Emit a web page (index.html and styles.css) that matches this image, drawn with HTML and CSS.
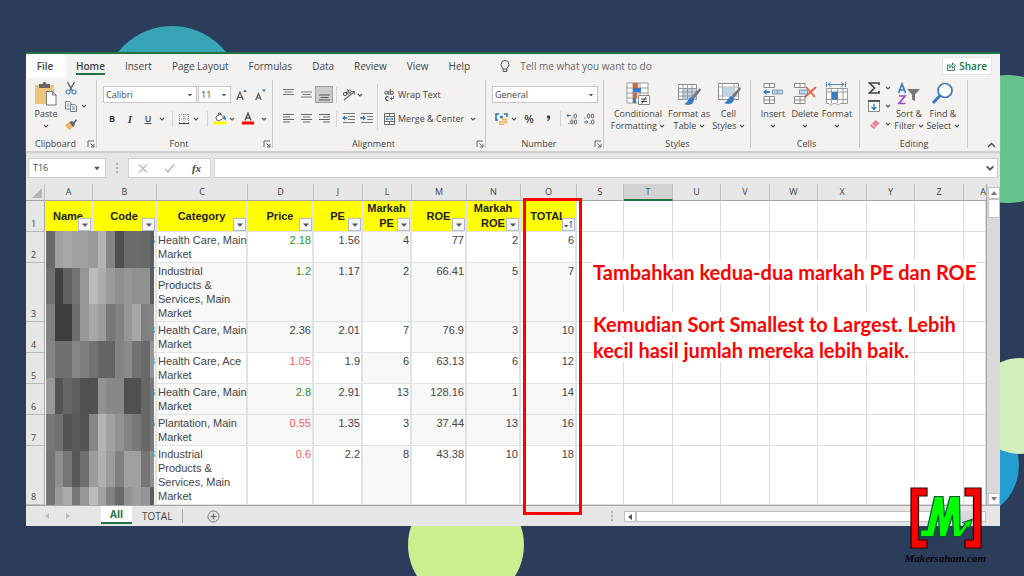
FILE: index.html
```html
<!DOCTYPE html>
<html lang="en">
<head>
<meta charset="utf-8">
<title>Markah PE dan ROE</title>
<link rel="stylesheet" href="styles.css">
</head>
<body>
<svg class="defs" width="0" height="0" aria-hidden="true">
  <symbol id="chev" viewBox="0 0 6 6"><path d="M1 2l2 2 2-2" fill="none" stroke="#555" stroke-width="1.1"/></symbol>
  <symbol id="tri" viewBox="0 0 6 6"><path d="M.8 2h4.4L3 4.6z" fill="#555"/></symbol>
  <symbol id="launch" viewBox="0 0 8 8"><path d="M1 7V1h6M3.500 3.500L7 7M7 3.800V7H3.800" fill="none" stroke="#666"/></symbol>
</svg>

<svg class="backdrop" viewBox="0 0 1024 576" preserveAspectRatio="none" aria-hidden="true">
  <circle cx="172" cy="95" r="69" fill="#37a4b7"/>
  <circle cx="1008" cy="139" r="64" fill="#65c28c"/>
  <circle cx="466" cy="545" r="58" fill="#c9ef8e"/>
  <circle cx="965" cy="465" r="54" fill="#249dd0"/>
  <circle cx="1020" cy="406" r="48" fill="#d3efbe"/>
</svg>

<main class="window">
  <nav class="tabs">
    <a href="#" class="tab file">File</a>
    <a href="#" class="tab home"><span>Home</span></a>
    <a href="#" class="tab">Insert</a>
    <a href="#" class="tab">Page Layout</a>
    <a href="#" class="tab">Formulas</a>
    <a href="#" class="tab">Data</a>
    <a href="#" class="tab">Review</a>
    <a href="#" class="tab">View</a>
    <a href="#" class="tab">Help</a>
    <a href="#" class="tell"><svg width="10" height="13" viewBox="0 0 10 13"><path d="M3.200 9C3 7.500 1 6.800 1 4.500a4 4 0 0 1 8 0C9 6.800 7 7.500 6.800 9zM3.200 9v2.500h3.600V9" fill="none" stroke="#555"/></svg>Tell me what you want to do</a>
    <button class="share"><svg width="9" height="9" viewBox="0 0 9 9"><path d="M3 3H.5v5.500h7V5.500M2.500 6c0-2 1-3 3-3V1l3 2.700-3 2.500V4.500C4 4.500 3 5 2.500 6z" fill="none" stroke="#217346" stroke-width=".9"/></svg>Share</button>
  </nav>

  <section class="ribbon">
    <div class="group g-clip">
      <div class="body big-row">
        <button class="big paste">
          <svg width="22" height="24" viewBox="0 0 22 24"><path d="M0 3h19v19H0z" fill="#ecc57a"/><path d="M4 2h3.500a2 2 0 0 1 4 0H15v4H4z" fill="#666"/><path d="M11.500 9.500h6l3.500 3.500v10h-9.500z" fill="#fff" stroke="#777"/><path d="M17.500 9.500V13H21" fill="none" stroke="#777"/></svg>
          <span>Paste</span><svg class="c"><use href="#chev"/></svg></button>
        <div class="mini">
          <div class="row"><button class="w18" aria-label="Cut"><svg width="12" height="13" viewBox="0 0 12 13"><path d="M2.500 0l5 9M9.500 0l-5 9" stroke="#666" stroke-width="1.500"/><circle cx="3" cy="10" r="2" fill="none" stroke="#4a86bd" stroke-width="1.200"/><circle cx="9" cy="10" r="2" fill="none" stroke="#4a86bd" stroke-width="1.200"/></svg></button></div>
          <div class="row"><button class="w18" aria-label="Copy"><svg width="12" height="11" viewBox="0 0 12 11"><path d="M.5.500h4l1.500 1.500v6H.500z" fill="#fff" stroke="#777"/><path d="M5.500 3.500h4L11.500 5v5.500h-6z" fill="#fff" stroke="#777"/><path d="M2 3h2M2 5h2M7 6h3M7 8h3" stroke="#4a86bd"/></svg></button><span class="w8"><svg class="c"><use href="#chev"/></svg></span></div>
          <div class="row"><button class="w18" aria-label="Format Painter"><svg width="12" height="11" viewBox="0 0 12 11"><path d="M0 6l4-2.500 4 4.500-3 3C3 10 1.500 9 0 6z" fill="#ecb75f"/><path d="M4 3l3-1 1.500 1L11 0l1 1.500-2.500 3L10 6 8 8z" fill="#666"/></svg></button></div>
        </div>
      </div>
      <div class="label">Clipboard<svg class="l"><use href="#launch"/></svg></div>
    </div>

    <div class="group g-font">
      <div class="body rows">
        <div class="row">
          <div class="combo c-name"><input aria-label="Font" value="Calibri"><svg class="c"><use href="#tri"/></svg></div>
          <div class="combo c-size"><input aria-label="Font size" value="11"><svg class="c"><use href="#tri"/></svg></div>
          <button class="w20" aria-label="Grow font"><svg width="11" height="12" viewBox="0 0 11 12"><path d="M.8 11L4 3l3.200 8M2 8.500h4" fill="none" stroke="#555" stroke-width="1.200"/><path d="M7 3l2-2.500L11 3z" fill="#2f75b5"/></svg></button>
          <button class="w18" aria-label="Shrink font"><svg width="11" height="12" viewBox="0 0 11 12"><path d="M.8 11L3.500 4.500 6.200 11M2 9h3" fill="none" stroke="#555" stroke-width="1.200"/><path d="M7 .5L9 3l2-2.500z" fill="#2f75b5"/></svg></button>
        </div>
        <div class="row">
          <button class="w18 b">B</button><button class="w18 i">I</button><button class="w18 u">U</button><span class="w10"><svg class="c"><use href="#chev"/></svg></span>
          <span class="w10 sep"></span>
          <button class="w14" aria-label="Borders"><svg width="10" height="10" viewBox="0 0 10 10"><path d="M.5 0v9M9.500 0v9M5 0v9M0 .5h10M0 5h10" stroke="#888" stroke-dasharray="1 1"/><path d="M0 9.500h10" stroke="#444"/></svg></button><span class="w10"><svg class="c"><use href="#chev"/></svg></span>
          <span class="w12 sep"></span>
          <button class="w14" aria-label="Fill color"><svg width="13" height="13" viewBox="0 0 13 13"><path d="M2 5l4.500-3.500L10 6 5.500 8.500 2.500 8zM4.500 4V1h2v2" fill="#fff" stroke="#666"/><path d="M10 3.500c2 1 2 3 1.500 5-1-.500-2-1.500-1.500-5z" fill="#2f75b5"/><path d="M0 9.500h12.500V12.500H0z" fill="#ff0"/></svg></button><span class="w10"><svg class="c"><use href="#chev"/></svg></span>
          <button class="w22" aria-label="Font color"><svg width="12" height="13" viewBox="0 0 12 13"><path d="M3 8.500l3-7.500 3 7.500M4 6h4" fill="none" stroke="#555" stroke-width="1.400"/><path d="M0 9.500h12v3H0z" fill="#f00"/></svg></button><span class="w10"><svg class="c"><use href="#chev"/></svg></span>
        </div>
      </div>
      <div class="label">Font<svg class="l"><use href="#launch"/></svg></div>
    </div>

    <div class="group g-align">
      <div class="body split">
        <div class="rows left">
          <div class="row">
            <button class="w18" aria-label="Top align"><svg width="11" height="13" viewBox="0 0 11 13"><path d="M0 1.500h11M1.500 4h8M0 6.500h11" stroke="#777"/></svg></button>
            <button class="w18" aria-label="Middle align"><svg width="11" height="13" viewBox="0 0 11 13"><path d="M0 4h11M1.500 6.500h8M0 9h11" stroke="#777"/></svg></button>
            <button class="w18 on" aria-label="Bottom align"><svg width="11" height="13" viewBox="0 0 11 13"><path d="M0 7h11M1.500 9.500h8M0 12h11" stroke="#555"/></svg></button>
            <span class="w6 sep"></span>
            <button class="w18" aria-label="Orientation"><svg width="13" height="13" viewBox="0 0 13 13"><path d="M2 12L12 4M9 3.500h3.300v3" fill="none" stroke="#666" stroke-width="1.100"/><circle cx="3" cy="6" r="1.700" fill="none" stroke="#555"/><path d="M4 3.500l2.500 3.500M5 1l3 4.500" stroke="#555"/><circle cx="7.500" cy="3.500" r="1.600" fill="none" stroke="#555"/></svg></button>
            <span class="w6"><svg class="c"><use href="#chev"/></svg></span>
          </div>
          <div class="row">
            <button class="w18" aria-label="Align left"><svg width="11" height="9" viewBox="0 0 11 9"><path d="M0 .5h11M0 3h7M0 5.500h11M0 8h7" stroke="#666"/></svg></button>
            <button class="w18" aria-label="Center"><svg width="11" height="9" viewBox="0 0 11 9"><path d="M0 .5h11M2 3h7M0 5.500h11M2 8h7" stroke="#666"/></svg></button>
            <button class="w18" aria-label="Align right"><svg width="11" height="9" viewBox="0 0 11 9"><path d="M0 .5h11M4 3h7M0 5.500h11M4 8h7" stroke="#666"/></svg></button>
            <span class="w6 sep"></span>
            <button class="w18" aria-label="Decrease indent"><svg width="13" height="11" viewBox="0 0 13 11"><path d="M1 .5h12M6 3.500h7M6 6.500h7M1 9.500h12" stroke="#777"/><path d="M0 5l3-2.500v1.800h2.500v1.500H3v1.700z" fill="#2f75b5"/></svg></button>
            <button class="w18" aria-label="Increase indent"><svg width="13" height="11" viewBox="0 0 13 11"><path d="M1 .5h12M7 3.500h6M7 6.500h6M1 9.500h12" stroke="#777"/><path d="M6 5L3 2.500v1.800H0v1.500h3v1.700z" fill="#2f75b5"/></svg></button>
          </div>
        </div>
        <div class="rows right">
          <div class="row"><button class="txt"><svg width="11" height="12" viewBox="0 0 11 12"><circle cx="2.300" cy="3.800" r="1.500" fill="none" stroke="#555"/><path d="M4.200 2v4M6.200 0v6" stroke="#555"/><circle cx="7.900" cy="3.800" r="1.600" fill="none" stroke="#555"/><path d="M4.500 8a1.800 1.800 0 1 0 0 3" fill="none" stroke="#555" stroke-width="1.200"/><path d="M9.500 7v2.500H6.500M8 8L6.300 9.500 8 11" fill="none" stroke="#2f75b5"/></svg>Wrap Text</button></div>
          <div class="row"><button class="txt"><svg width="11" height="12" viewBox="0 0 11 12"><path d="M.5.500h10v11H.500zM.5 3.500h10M.5 8.500h10M5.500.500v3M5.500 8.500v3" fill="#fff" stroke="#666"/><path d="M2 6h7M3.500 4.700L2 6l1.500 1.300M7.500 4.700L9 6 7.500 7.300" fill="none" stroke="#2f75b5"/></svg>Merge &amp; Center</button><span class="w10"><svg class="c"><use href="#chev"/></svg></span></div>
        </div>
      </div>
      <div class="label">Alignment<svg class="l"><use href="#launch"/></svg></div>
    </div>

    <div class="group g-num">
      <div class="body rows">
        <div class="row"><div class="combo c-fmt"><input aria-label="Number format" value="General"><svg class="c"><use href="#tri"/></svg></div></div>
        <div class="row">
          <button class="w18" aria-label="Accounting format"><svg width="13" height="12" viewBox="0 0 13 12"><path d="M4.500 1H1v6h2M8.500 1H12v3" fill="none" stroke="#2f75b5" stroke-width="1.600"/><path d="M4 1h5v4H4z" fill="#fff"/><circle cx="6.500" cy="4" r="1.600" fill="#2f75b5"/><path d="M7 5.500h5.500V10H9.500v2H4V8h3z" fill="#ecb75f"/><path d="M4 10h5.500M7 7.800h5.500" stroke="#fff" stroke-width=".6"/></svg></button><span class="w8"><svg class="c"><use href="#chev"/></svg></span>
          <button class="w22 pct">%</button><button class="w16" aria-label="Comma style"><svg width="5" height="7" viewBox="0 0 5 7"><circle cx="2.500" cy="2" r="1.700" fill="#444"/><path d="M4.200 2c0 2-1 3.500-2.700 4.200L1 5.300C2.200 4.800 2.800 4 2.800 3z" fill="#444"/></svg></button><span class="w8 sep"></span>
          <button class="w16" aria-label="Increase decimal"><svg width="12" height="12" viewBox="0 0 12 12"><path d="M5 2.500H1M2.500 1L1 2.500 2.500 4" fill="none" stroke="#2f75b5"/><path d="M6 4.500v1M3 10v1" stroke="#555"/><rect x="8" y="1" width="2.500" height="4" rx="1.200" fill="none" stroke="#666"/><rect x="4.800" y="7" width="2.200" height="4" rx="1.100" fill="none" stroke="#666"/><rect x="8.500" y="7" width="2.200" height="4" rx="1.100" fill="none" stroke="#666"/></svg></button>
          <button class="w18" aria-label="Decrease decimal"><svg width="12" height="12" viewBox="0 0 12 12"><path d="M1 9h4M3.500 7.500L5 9l-1.500 1.500" fill="none" stroke="#2f75b5"/><path d="M2 4.500v1M7 10v1" stroke="#555"/><rect x="8.500" y="7" width="2.500" height="4" rx="1.200" fill="none" stroke="#666"/><rect x="4.500" y="1" width="2.200" height="4" rx="1.100" fill="none" stroke="#666"/><rect x="8.500" y="1" width="2.200" height="4" rx="1.100" fill="none" stroke="#666"/></svg></button>
        </div>
      </div>
      <div class="label">Number<svg class="l"><use href="#launch"/></svg></div>
    </div>

    <div class="group g-styles">
      <div class="body big-row">
        <button class="big w60"><svg width="24" height="24" viewBox="0 0 24 24"><path d="M1 1h21v20H1zM1 6h21M1 11h21M1 16h21M7 1v20M14 1v20" fill="#fff" stroke="#999"/><path d="M7 1h5v5H7zM7 11h4v5H7z" fill="#e0623f"/><path d="M7 6h8v4.500H7zM7 16h3v5H7z" fill="#3b7cc0"/><path d="M12.500 13.500h11v9h-11z" fill="#fff" stroke="#888"/><path d="M15 17h6M15 19.500h6M20 15l-4 6.500" stroke="#444"/></svg><span>Conditional<br>Formatting <svg class="c"><use href="#chev"/></svg></span></button>
        <button class="big w42"><svg width="24" height="24" viewBox="0 0 24 24"><path d="M1.500 2.500h18v15h-18z" fill="#fff" stroke="#888"/><path d="M6 7h13.500v10.500H6z" fill="#bcd3ea"/><path d="M1.500 6.500h18M1.500 10h18M1.500 14h18M6 2.500v15M10.500 2.500v15M15 2.500v15" stroke="#999"/><path d="M23 6l-8 8 2 3 7-9z" fill="#777"/><path d="M15 15c-4 0-3 5-8 7 5 2 10 1 10-5z" fill="#3b7cc0"/></svg><span>Format as<br>Table <svg class="c"><use href="#chev"/></svg></span></button>
        <button class="big w37"><svg width="24" height="24" viewBox="0 0 24 24"><path d="M1.500 1.500h20v16h-20z" fill="#fff" stroke="#888"/><path d="M1.500 5h20M1.500 14h20M5.500 1.500v16M17 1.500v16" stroke="#aaa"/><path d="M6 5.500h11v8H6z" fill="#bcd3ea"/><path d="M23 5l-8 8 2 3 7-9z" fill="#777"/><path d="M15 14c-4 0-3 5-8 7 5 2 10 1 10-5z" fill="#3b7cc0"/></svg><span>Cell<br>Styles <svg class="c"><use href="#chev"/></svg></span></button>
      </div>
      <div class="label">Styles</div>
    </div>

    <div class="group g-cells">
      <div class="body big-row">
        <button class="big w32"><svg width="22" height="24" viewBox="0 0 22 24"><path d="M2 1.500h10.500v4H2zM7.500 1.500v4M2 14.500h10.500v7H2zM7.500 14.500v7M2 18h10.500" fill="#fff" stroke="#888"/><path d="M10.500 8h10v4h-10zM15.500 8v4" fill="#bcd3ea" stroke="#7c99b5"/><path d="M1 10l3.500-3v2H8v2H4.500v2z" fill="#3b7cc0"/></svg><span>Insert</span><svg class="c"><use href="#chev"/></svg></button>
        <button class="big w32"><svg width="24" height="24" viewBox="0 0 24 24"><path d="M1.500 1.500H12v4H1.500zM7 1.500v4M1.500 14.500H12v7H1.500zM7 14.500v7M1.500 18H12" fill="#fff" stroke="#888"/><path d="M6.500 8h8v4h-8z" fill="#bcd3ea" stroke="#7c99b5"/><path d="M13 5l9 10M23 5L12 15" stroke="#e0623f" stroke-width="1.800"/></svg><span>Delete</span><svg class="c"><use href="#chev"/></svg></button>
        <button class="big w32"><svg width="24" height="24" viewBox="0 0 24 24"><path d="M3 2.500h16M5.500.500L3 2.500l2.500 2M16.500.500l2.500 2-2.500 2M1.500 0v5M20.500 0v5" fill="none" stroke="#4a86bd"/><path d="M1.500 6.500h21v15H15l-2 2-2-2H8l-2 2-2-2H1.500zM1.500 10h21M1.500 17.500h21M6.500 6.500v15M12.500 6.500v15M18 6.500v15" fill="#fff" stroke="#999"/><path d="M7 10h6v7.500H7z" fill="#3b7cc0"/></svg><span>Format</span><svg class="c"><use href="#chev"/></svg></button>
      </div>
      <div class="label">Cells</div>
    </div>

    <div class="group g-edit">
      <div class="body big-row">
        <div class="mini">
          <div class="row"><button class="w20" aria-label="AutoSum"><svg width="12" height="12" viewBox="0 0 12 12"><path d="M11 3V1H1.500L6.500 6l-5 5H11V9" fill="none" stroke="#444" stroke-width="1.700"/></svg></button><span class="w8"><svg class="c"><use href="#chev"/></svg></span></div>
          <div class="row"><button class="w20" aria-label="Fill"><svg width="12" height="12" viewBox="0 0 12 12"><path d="M.5 1h11v10.500H.500z" fill="#fff" stroke="#888"/><path d="M0 1h12" stroke="#555" stroke-width="2"/><path d="M6 3.500v6M3.500 7L6 9.500 8.500 7" fill="none" stroke="#2f75b5" stroke-width="1.300"/></svg></button><span class="w8"><svg class="c"><use href="#chev"/></svg></span></div>
          <div class="row"><button class="w20" aria-label="Clear"><svg width="11" height="11" viewBox="0 0 11 11"><path d="M6.500 1L10.500 4 5 10 1 7z" fill="#e8829a"/><path d="M2.800 5L7 8.200" stroke="#fff" stroke-width=".7"/></svg></button><span class="w8"><svg class="c"><use href="#chev"/></svg></span></div>
        </div>
        <button class="big w34"><svg width="24" height="24" viewBox="0 0 24 24"><path d="M1.500 11l3.500-9 3.500 9M2.800 8h4.500" fill="none" stroke="#3b7cc0" stroke-width="1.700"/><path d="M2 14h6l-6 7.500h6.500" fill="none" stroke="#9b4fc0" stroke-width="1.700"/><path d="M10 7h13l-5 5.500V19l-3-1.500v-5z" fill="#777"/></svg><span>Sort &amp;<br>Filter <svg class="c"><use href="#chev"/></svg></span></button>
        <button class="big w34"><svg width="24" height="24" viewBox="0 0 24 24"><path d="M9.500 13L2 21" stroke="#3b7cc0" stroke-width="3"/><circle cx="14" cy="8.500" r="7" fill="#fff" stroke="#3b7cc0" stroke-width="1.700"/></svg><span>Find &amp;<br>Select <svg class="c"><use href="#chev"/></svg></span></button>
      </div>
      <div class="label">Editing</div>
    </div>
    <div class="collapse"><button aria-label="Collapse ribbon"><svg width="9" height="6" viewBox="0 0 9 6"><path d="M1 5l3.500-3.500L8 5" fill="none" stroke="#444" stroke-width="1.300"/></svg></button></div>
  </section>

  <section class="formula">
    <div class="namebox"><input aria-label="Name box" value="T16"><svg class="c7"><use href="#tri"/></svg></div>
    <span class="grip"></span>
    <div class="fx">
      <button aria-label="Cancel"><svg width="10" height="9" viewBox="0 0 10 9"><path d="M1 .5l8 8M9 .5l-8 8" stroke="#bbb" stroke-width="1.300"/></svg></button>
      <button aria-label="Enter"><svg width="11" height="9" viewBox="0 0 11 9"><path d="M1 5l3 3 6-7.500" fill="none" stroke="#bbb" stroke-width="1.600"/></svg></button>
      <button class="fn">fx</button>
    </div>
    <div class="finput"><input aria-label="Formula"><svg class="c9"><use href="#chev"/></svg></div>
  </section>

  <section class="area">
    <div class="sheet">
      <table>
        <colgroup><col class="k19"><col class="k48"><col class="k64"><col class="k91"><col class="k66"><col class="k49"><col class="k49"><col class="k55"><col class="k54"><col class="k56"><col class="k47"><col class="k49"><col class="k48"><col class="k49"><col class="k48"><col class="k49"><col class="k48"><col class="k49"><col></colgroup>
        <thead><tr><th class="corner"><svg width="10" height="10" viewBox="0 0 10 10"><path d="M10 0v10H0z" fill="#b5b5b5"/></svg></th><th>A</th><th>B</th><th>C</th><th>D</th><th>J</th><th>L</th><th>M</th><th>N</th><th>O</th><th>S</th><th class="sel">T</th><th>U</th><th>V</th><th>W</th><th>X</th><th>Y</th><th>Z</th><th class="cut">A</th></tr></thead>
        <tbody id="rows"></tbody>
      </table>
      <svg class="mosaic" id="mosaic" width="108" height="275" viewBox="0 0 108 275" shape-rendering="crispEdges" aria-hidden="true"></svg>
      <div class="note"><p><span>Tambahkan kedua-dua markah PE dan ROE</span></p><p><span>Kemudian Sort Smallest to Largest. Lebih<br>kecil hasil jumlah mereka lebih baik.</span></p></div>
    </div>
    <div class="vscroll"><button aria-label="Scroll up"><svg width="6" height="4" viewBox="0 0 6 4"><path d="M0 4l3-4 3 4z" fill="#777"/></svg></button><span class="thumb"></span><button class="down" aria-label="Scroll down"><svg width="6" height="4" viewBox="0 0 6 4"><path d="M0 0l3 4 3-4z" fill="#777"/></svg></button></div>
  </section>

  <footer class="sheets">
    <div class="arrows"><svg width="4" height="6" viewBox="0 0 4 6"><path d="M4 0v6L0 3z" fill="#bbb"/></svg><svg width="4" height="6" viewBox="0 0 4 6"><path d="M0 0v6l4-3z" fill="#bbb"/></svg></div>
    <a href="#" class="st current">All</a><a href="#" class="st">TOTAL</a>
    <button class="add" aria-label="New sheet"><svg width="13" height="13" viewBox="0 0 13 13"><circle cx="6.500" cy="6.500" r="5.500" fill="none" stroke="#777"/><path d="M6.500 3.500v6M3.500 6.500h6" stroke="#777" stroke-width="1.400"/></svg></button>
    <span class="grip"></span>
    <div class="hscroll"><button aria-label="Scroll left"><svg width="4" height="6" viewBox="0 0 4 6"><path d="M4 0v6L0 3z" fill="#555"/></svg></button><span class="thumb"></span><span class="track"></span><button aria-label="Scroll right"><svg width="4" height="6" viewBox="0 0 4 6"><path d="M0 0v6l4-3z" fill="#555"/></svg></button></div>
  </footer>
  <div class="frame"></div>
</main>

<div class="brand">
  <svg width="72" height="62" viewBox="0 0 72 62" aria-hidden="true">
    <path d="M1 1h16v8H8.500v44H17v8H1zM71 1H55v8h8.500v44H55v8h16z" fill="#f00" stroke="#300" stroke-width="1.200"/>
    <path d="M10.500 43h6.500L24.500 9.500H33L34.500 30 40 9.500h9.500L50 43l5-6-2-1.500 9-3-2.500 9.500-2-2.500L50.500 49.500H43.500L42.500 28 36 49.500H29.500L28.500 28 23.500 49.500h-13z" fill="#0f0" stroke="#053" stroke-width="1.200"/>
  </svg>
  <span>Makersaham.com</span>
</div>
<script src="script.js"></script>
</body>
</html>
```
FILE: script.js
```js
const heads = ["Name", "Code", "Category", "Price", "PE", "Markah PE", "ROE", "Markah ROE", "TOTAL"];
const data = [
  ["6", "Health Care, Main\nMarket", "2.18", "1.56", "4", "77", "2", "6", "up"],
  ["7", "Industrial\nProducts &\nServices, Main\nMarket", "1.2", "1.17", "2", "66.41", "5", "7", "up shade both"],
  ["8", "Health Care, Main\nMarket", "2.36", "2.01", "7", "76.9", "3", "10", "shade"],
  ["8", "Health Care, Ace\nMarket", "1.05", "1.9", "6", "63.13", "6", "12", "down"],
  ["8", "Health Care, Main\nMarket", "2.8", "2.91", "13", "128.16", "1", "14", "up shade"],
  ["6", "Plantation, Main\nMarket", "0.55", "1.35", "3", "37.44", "13", "16", "down shade"],
  ["8", "Industrial\nProducts &\nServices, Main\nMarket", "0.6", "2.2", "8", "43.38", "10", "18", "down"]
];
const body = document.getElementById("rows");

function cell(row, tag, text, cls) {
  const c = document.createElement(tag);
  c.textContent = text;
  if (cls) c.className = cls;
  row.appendChild(c);
  return c;
}
function blanks(row) {
  for (let i = 0; i < 9; i++) cell(row, "td", "", "blank");
}

const first = body.insertRow();
first.className = "titles";
cell(first, "th", "1", "num");
heads.forEach((h, i) => {
  const c = cell(first, "td", "", "title t" + i);
  const s = document.createElement("span");
  s.textContent = h;
  const b = document.createElement("button");
  b.setAttribute("aria-label", "Filter " + h);
  b.innerHTML = h === "TOTAL"
    ? '<svg width="9" height="9" viewBox="0 0 9 9"><path d="M0 5h4.500L2.200 7.500z" fill="#555"/><path d="M7 8V1M5.800 2.500L7 1l1.200 1.500" fill="none" stroke="#555" stroke-width=".9"/></svg>'
    : '<svg width="6" height="4" viewBox="0 0 6 4"><path d="M0 .5h6L3 3.800z" fill="#555"/></svg>';
  c.append(s, b);
});
blanks(first);

data.forEach((d, i) => {
  const r = body.insertRow();
  r.className = d[8];
  cell(r, "th", String(i + 2), "num");
  cell(r, "td", "");
  cell(r, "td", d[0], "code");
  cell(r, "td", d[1], "cat");
  ["price", "", "l", "", "", ""].forEach((cls, k) => cell(r, "td", d[k + 2], "n " + cls));
  blanks(r);
});

const xs = [0, 9, 17, 26, 34, 43, 52, 60, 69, 78, 86, 95, 104, 108];
const ys = [0, 37, 73, 110, 147, 183, 220, 256, 275];
const greys = [
  [106, 160, 168, 160, 160, 154, 180, 132, 78, 106, 106, 104, 92],
  [112, 66, 98, 116, 150, 188, 172, 156, 144, 150, 144, 144, 92],
  [130, 60, 60, 110, 152, 168, 156, 120, 130, 150, 168, 128, 132],
  [132, 112, 112, 134, 126, 114, 100, 100, 130, 138, 114, 106, 150],
  [152, 84, 102, 94, 80, 80, 146, 136, 136, 80, 80, 104, 120],
  [120, 112, 84, 90, 84, 134, 180, 162, 146, 132, 120, 104, 120],
  [116, 142, 118, 88, 112, 156, 176, 156, 128, 160, 160, 118, 144],
  [116, 156, 170, 118, 150, 188, 162, 130, 106, 148, 158, 148, 92]
];
document.getElementById("mosaic").innerHTML = greys.map((line, r) => line.map((g, c) =>
  `<rect x="${xs[c]}" y="${ys[r]}" width="${xs[c + 1] - xs[c]}" height="${ys[r + 1] - ys[r]}" fill="rgb(${g},${g},${g})"/>`).join("")).join("");
```
FILE: styles.css
```css
* { box-sizing: border-box; }
body {
  margin: 0;
  min-height: 100vh;
  background: #2b3d5b;
  color: #444;
  font: 9px/12px "Open Sans", "Noto Sans", sans-serif;
  position: relative;
  overflow: hidden;
}
button, input { font: inherit; color: inherit; border: 0; padding: 0; margin: 0; background: none; }
button { display: flex; align-items: center; justify-content: center; }
input { width: 100%; min-width: 0; outline: 0; }
a { color: inherit; text-decoration: none; }
svg { flex: none; display: block; }
.defs { position: absolute; }
.backdrop { position: absolute; inset: 0; width: 100%; height: 100%; }

.window { position: relative; margin: 52px 24px 0 26px; background: #e6e6e6; border-top: 2px solid #217346; }

.tabs { display: flex; height: 24px; align-items: stretch; background: #f3f2f1; font-size: 10px; }
.tab { display: flex; align-items: center; padding: 0 10px; }
.file { background: #fdfdfd; font-weight: 600; width: 40px; justify-content: center; padding: 0 2px 0 0; }
.home { font-weight: 600; align-items: flex-start; padding-top: 5px; }
.home span { line-height: 14px; border-bottom: 2px solid #217346; }
.tell { display: flex; align-items: center; gap: 10px; margin-left: 20px; color: #666; }
.share { margin: 3px 8px 3px auto; padding: 0 4px; gap: 3px; background: #fff; color: #217346; font-weight: 600; border: 1px solid #e4e4e4; }

.ribbon { display: flex; background: #f3f2f1; border-bottom: 1px solid #cfcfcf; box-shadow: 0 1px 1px #cfcfcf; position: relative; }
.group { position: relative; flex: none; padding-bottom: 1px; }
.group::after { content: ""; position: absolute; right: 0; top: 2px; bottom: 3px; border-right: 1px solid #cbcbcb; }
.g-clip { width: 71px; padding-left: 4px; }
.g-font { width: 176px; padding-left: 6px; }
.g-align { width: 213px; padding-left: 6px; }
.g-num { width: 118px; padding-left: 6px; }
.g-styles { width: 147px; padding-left: 4px; }
.g-cells { width: 109px; padding-left: 6px; }
.g-edit { width: 108px; padding-left: 4px; }
.body { height: 59px; }
.label { height: 13px; line-height: 13px; display: flex; align-items: center; justify-content: center; padding-right: 4px; position: relative; }
.g-clip .label { padding-right: 16px; }
.g-font .label, .g-align .label, .g-num .label { padding-right: 18px; }
.label .l { position: absolute; right: 2px; top: 3px; width: 8px; height: 8px; }
.rows { display: flex; flex-direction: column; gap: 7px; padding-top: 8px; }
.row { display: flex; align-items: center; height: 17px; }
.rows .row button { height: 17px; }
.split { display: flex; }
.left { width: 99px; height: 52px; position: relative; }
.left::after { content: ""; position: absolute; right: 0; top: 6px; bottom: 0; border-right: 1px solid #d4d4d4; }
.right { padding-left: 6px; }
.txt { gap: 3px; white-space: nowrap; margin-right: 4px; }
.big-row { display: flex; padding-top: 4px; }
.big { flex-direction: column; justify-content: flex-start; line-height: 12px; white-space: nowrap; }
.big > svg:first-child { margin-bottom: 2px; height: 24px; }
.big > .c { margin-top: 3px; }
.big span .c { display: inline-block; }
.paste { width: 32px; }
.mini { display: flex; flex-direction: column; margin-top: -3px; }
.mini .row { height: 18px; }
.c { width: 6px; height: 6px; }
.c7 { width: 8px; height: 8px; }
.c9 { width: 10px; height: 10px; }
.row > span { display: flex; justify-content: center; }
.w6 { width: 6px; } .w8 { width: 8px; } .w10 { width: 10px; } .w12 { width: 12px; } .w14 { width: 14px; }
.w16 { width: 16px; } .w18 { width: 18px; } .w20 { width: 20px; } .w22 { width: 22px; }
.w32 { width: 32px; } .w34 { width: 34px; } .w37 { width: 37px; } .w42 { width: 42px; } .w60 { width: 60px; }
.sep::before { content: ""; height: 16px; border-left: 1px solid #d4d4d4; }
.b { font-weight: 700; }
.rows .i { font: italic 700 11px "Liberation Serif", serif; }
.u { font-weight: 600; text-decoration: underline; }
.on { background: #cdcccb; border: 1px solid #a0a0a0; }
.rows .pct { font-size: 11px; font-weight: 600; }
.combo { display: flex; align-items: center; height: 17px; background: #fff; border: 1px solid #c6c6c6; padding: 0 3px 0 2px; }
.c-name { width: 94px; margin-right: 1px; }
.c-size { width: 33px; }
.c-fmt { width: 106px; }
.collapse { flex: 1; display: flex; align-items: flex-end; justify-content: flex-end; padding: 0 4px 3px; }

.formula { display: flex; padding: 6px 2px; height: 32px; }
.namebox, .fx, .finput { display: flex; align-items: center; background: #fff; border: 1px solid #cfcfcf; height: 20px; }
.namebox { width: 78px; padding: 0 4px; }
.grip { width: 2px; height: 10px; margin: 5px 10px; border-left: 2px dotted #b0b0b0; }
.fx { width: 83px; margin-right: 3px; }
.fx button { flex: 1; }
.fx .fn { font: italic 700 11px "Liberation Serif", serif; }
.finput { flex: 1; padding-right: 2px; }

.area { display: flex; }
.sheet { flex: 1; min-width: 0; position: relative; overflow: hidden; background: #fff; border-right: 1px solid #a6a6a6; }
table { width: 100%; table-layout: fixed; border-collapse: separate; border-spacing: 0; font: 11px/14px "Liberation Sans", Arial, sans-serif; }
th, td { padding: 1px; }
thead th { height: 17px; padding: 0; background: #e6e6e6; font: 9px/14px "Open Sans", sans-serif; border-right: 1px solid #c0c0c0; border-bottom: 1px solid #a6a6a6; }
thead .sel { background: #d2d2d2; color: #217346; border-bottom: 2px solid #217346; }
thead .cut { text-align: right; border-right: 0; }
.corner svg { margin: 2px 0 0 6px; }
.num { background: #e6e6e6; font: 9px/14px "Open Sans", sans-serif; vertical-align: bottom; border-right: 1px solid #a6a6a6; border-bottom: 1px solid #b8b8b8; padding: 0 3px 0 0; }
td { vertical-align: top; border-right: 2px solid #dfe3e8; border-bottom: 1px solid #dfe3e8; }
.cat { padding-right: 0; white-space: pre; }
.blank { border-right: 1px solid #dcdcdc; border-bottom: 1px solid #dcdcdc; }
.titles td { height: 31px; }
.title { position: relative; background: #ff0; color: #222; font-weight: 700; text-align: center; vertical-align: middle; padding: 0; line-height: 15px; }
.title span { display: block; }
.title button { position: absolute; right: 0; bottom: 0; width: 13px; height: 13px; background: #f5f7fb; border: 1px solid #b4bccb; }
.t5 span, .t7 span { padding: 0 4px; }
.n { text-align: right; }
.code { text-align: right; color: #2f75b5; padding-right: 0; }
.shade .cat, .shade .n, .n.l { background: #f8f8f8; }
.shade .n.l { background: #fff; }
.both .n.l { background: #f8f8f8; }
.up .price { color: #1f941f; }
.down .price { color: #f95d5d; }
.k19 { width: 19px; } .k47 { width: 47px; } .k48 { width: 48px; } .k49 { width: 49px; } .k54 { width: 54px; } .k55 { width: 55px; }
.k56 { width: 56px; } .k64 { width: 64px; } .k66 { width: 66px; } .k91 { width: 91px; }
.mosaic { position: absolute; left: 20px; top: 47px; }
.note { position: absolute; left: 567px; top: 75px; color: #f00; font: 700 20px/26px Lato, "Open Sans", sans-serif; white-space: nowrap; }
.note p { margin: 0 0 26px; }
.note span { background: #fff; }

.vscroll { width: 13px; padding-left: 1px; display: flex; flex-direction: column; background: #d9d9d9; border-top: 3px solid #e6e6e6; }
.vscroll button { height: 12px; background: #fff; border: 1px solid #c4c4c4; }
.vscroll .thumb { height: 19px; background: #fff; border: 1px solid #c4c4c4; }
.vscroll .down { margin-top: auto; }

.sheets { display: flex; align-items: stretch; height: 21px; border-top: 1px solid #a6a6a6; font-size: 10px; padding-right: 14px; }
.arrows { display: flex; align-items: center; gap: 17px; width: 75px; padding-left: 19px; }
.st { display: flex; align-items: center; padding: 0 10px; margin: 3px 0; border-right: 1px solid #aaa; }
.st.current { margin: 0 0 2px; padding: 0 9px; background: #fff; color: #217346; font-weight: 700; border: 0; border-bottom: 2px solid #217346; }
.add { margin-left: 24px; }
.sheets .grip { margin-left: auto; margin-right: 11px; }
.hscroll { display: flex; width: 362px; margin: 5px 0 4px; background: #d9d9d9; }
.hscroll button { width: 12px; background: #fff; border: 1px solid #c0c0c0; }
.hscroll .thumb { flex: 1; background: #fff; border: 1px solid #c0c0c0; }
.hscroll .track { width: 14px; }

.frame { position: absolute; left: 497px; top: 144px; width: 59px; height: 317px; border: 3px solid #f00; }
.brand { position: absolute; right: 38px; top: 487px; display: flex; flex-direction: column; align-items: flex-end; gap: 1px; color: #050505; }
.brand svg { margin-right: 4px; }
.brand span { font: italic 700 11px/16px "Liberation Serif", serif; }
```
